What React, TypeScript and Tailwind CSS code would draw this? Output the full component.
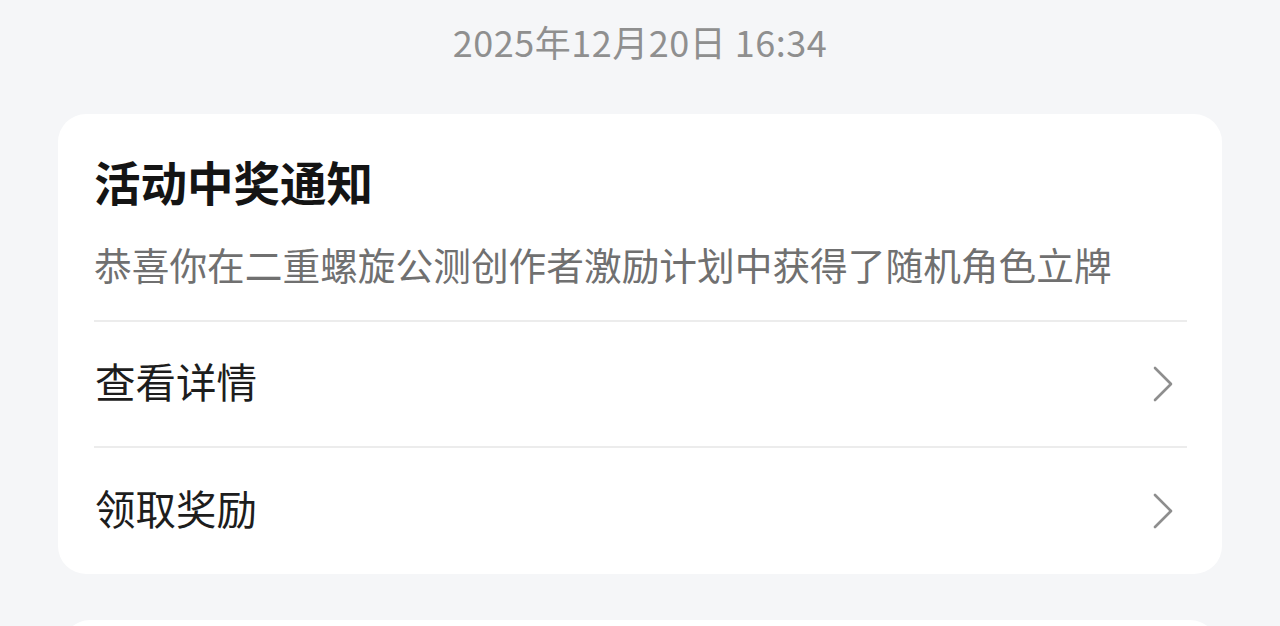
const font = { fontFamily: '"Noto Sans CJK SC", "Noto Sans", sans-serif' };

function Chevron() {
  return (
    <svg width="20" height="36" viewBox="0 0 20 36" fill="none" className="shrink-0">
      <polyline points="2,2 18,18 2,34" stroke="#8e8e8e" strokeWidth="2.6" strokeLinecap="round" strokeLinejoin="round" />
    </svg>
  );
}

function Row({ label, last }: { label: string; last?: boolean }) {
  return (
    <div className={`flex h-[126px] items-center justify-between pr-[14px] ${last ? "" : "border-b-2 border-[#ececec]"}`}>
      <span className="pb-[6px] pl-[1px] text-[40.5px] leading-none text-[#1d1d1d]">{label}</span>
      <Chevron />
    </div>
  );
}

export default function App() {
  return (
    <div style={font} className="h-[626px] w-[1280px] overflow-hidden bg-[#f5f6f8]">
      <div className="flex h-[88px] items-center justify-center pb-[6px]">
        <span className="text-[36px] leading-none tracking-[0.5px] text-[#8f8f8f]">2025年12月20日 16:34</span>
      </div>
      <div className="mx-[58px] mt-[26px] rounded-[28px] bg-white pl-[36px] pr-[35px]">
        <div className="border-b-2 border-[#ececec] pt-[39px] pb-[32px]">
          <h1 className="text-[46.5px] font-bold leading-[56px] text-[#141414]">活动中奖通知</h1>
          <p className="mt-[31px] text-[37.7px] leading-[48px] text-[#707070]">恭喜你在二重螺旋公测创作者激励计划中获得了随机角色立牌</p>
        </div>
        <Row label="查看详情" />
        <Row label="领取奖励" last />
      </div>
      <div className="mx-[62px] mt-[46px] h-[120px] rounded-[28px] bg-white" />
    </div>
  );
}
